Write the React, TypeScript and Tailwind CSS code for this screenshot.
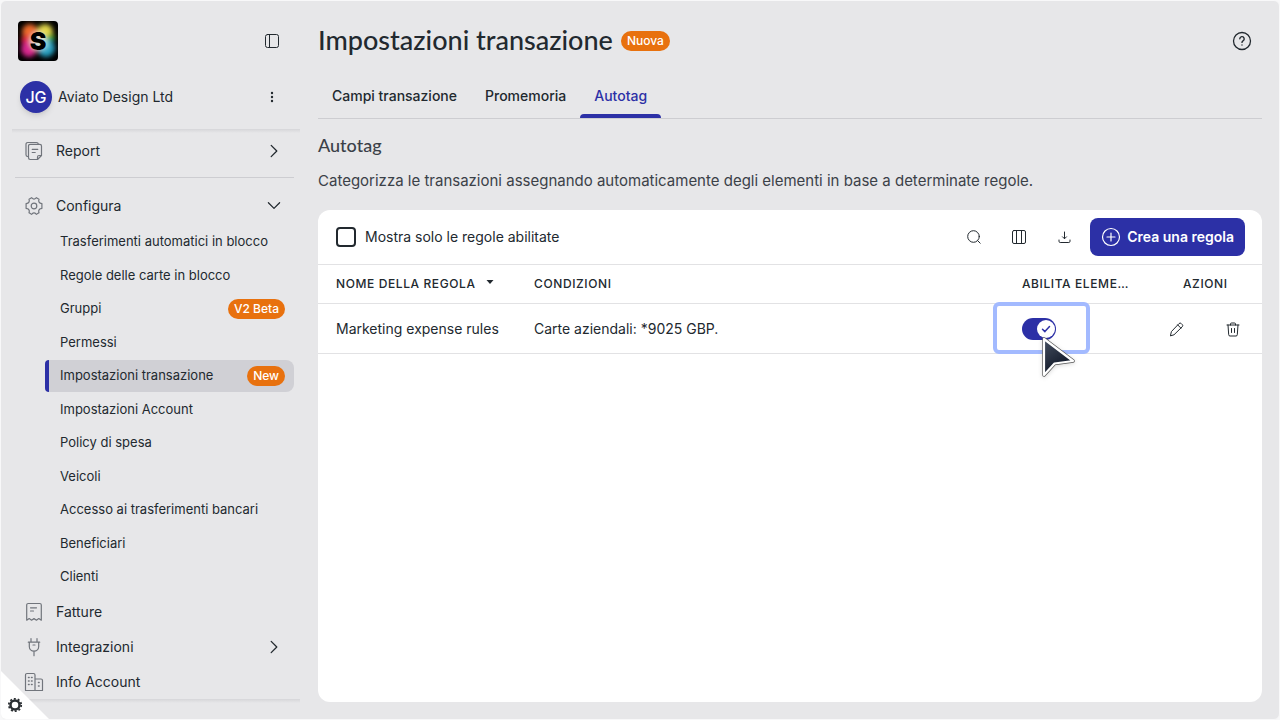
import { useState } from "react";
import type { ReactNode } from "react";
import clsx from "clsx";

type IconProps = { className?: string; children: ReactNode; box?: string; stroke?: number };

const Icon = ({ className, children, box = "0 0 20 20", stroke = 1.2 }: IconProps) => (
  <svg
    viewBox={box}
    className={clsx("shrink-0", className)}
    fill="none"
    stroke="currentColor"
    strokeWidth={stroke}
    strokeLinecap="round"
    strokeLinejoin="round"
    aria-hidden="true"
  >
    {children}
  </svg>
);

const ReportIcon = () => (
  <Icon className="size-5">
    <path d="M4.500 15.500h-.8A1.700 1.700 0 0 1 2 13.800V3.200A1.700 1.700 0 0 1 3.700 1.500h8.800A1.700 1.700 0 0 1 14.200 3.200" />
    <path d="M6.200 3.300h9.600a1.700 1.700 0 0 1 1.700 1.700v9.500l-4 4H6.200a1.700 1.700 0 0 1-1.700-1.700V5a1.700 1.700 0 0 1 1.700-1.700z" />
    <path d="M17.500 14.500h-2.500a1.500 1.500 0 0 0-1.500 1.500v2.500M8.200 8.300h5.600M8.200 11.500h3" />
  </Icon>
);

const GearIcon = () => (
  <Icon className="size-5">
    <path d="M8.100 2.200a2.600 2.600 0 0 0 3.800 0l.5-.5 2.600 1.500-.2.800a2.600 2.600 0 0 0 2 3.300l1.100.3v4.800l-1.100.3a2.600 2.600 0 0 0-2 3.300l.2.800-2.600 1.500-.5-.5a2.600 2.600 0 0 0-3.800 0l-.5.500L5 16.800l.2-.8a2.600 2.600 0 0 0-2-3.300l-1.100-.3V7.600l1.100-.3a2.600 2.600 0 0 0 2-3.300L5 3.200l2.600-1.500z" />
    <circle cx="10" cy="10" r="2.800" />
  </Icon>
);

const InvoiceIcon = () => (
  <Icon className="size-5">
    <path d="M2.700 18.200V3a1.500 1.500 0 0 1 1.500-1.500h11.600A1.500 1.500 0 0 1 17.300 3v15.200l-2.500-1.700-2.400 1.700-2.400-1.700-2.400 1.700-2.400-1.700zM6.500 5.800h6M6.500 9h3" />
  </Icon>
);

const PlugIcon = () => (
  <Icon className="size-5">
    <path d="M7 1.500v3.700M13 1.500v3.700M4.300 5.200h11.400M5.300 5.200v4.300a4.700 4.700 0 0 0 9.400 0V5.200M10 14.200v4.500M9 8h2" />
  </Icon>
);

const BuildingIcon = () => (
  <Icon className="size-5">
    <path d="M1.500 18.500V3A1.500 1.500 0 0 1 3 1.500h6.500A1.500 1.500 0 0 1 11 3v15.500zM11 7h6a1.500 1.500 0 0 1 1.500 1.500v10H11" />
    <path
      d="M4.500 5.500h.6M7.500 5.500h.6M4.500 9h.6M7.500 9h.6M4.500 12.500h.6M7.500 12.500h.6M14.500 10.500h.6M14.500 14h.6"
      strokeWidth="1.500"
    />
  </Icon>
);

const Chevron = ({ down }: { down?: boolean }) => (
  <Icon className="size-4 text-[#22292f]">
    <path d={down ? "M3 6l7 7 7-7" : "M6.500 3l7 7-7 7"} strokeWidth="1.600" />
  </Icon>
);

const Logo = () => (
  <svg viewBox="0 0 40 40" className="size-10 rounded" role="img" aria-label="S">
    <defs>
      <filter id="glow" x="-50%" y="-50%" width="200%" height="200%">
        <feGaussianBlur stdDeviation="2.800" />
      </filter>
    </defs>
    <rect width="40" height="40" fill="#000" />
    <g filter="url(#glow)">
      <circle cx="12" cy="11" r="8" fill="#ee6a2c" />
      <circle cx="27" cy="11" r="8" fill="#e2d84a" />
      <circle cx="33" cy="17" r="4" fill="#3a9e2e" />
      <circle cx="8" cy="19" r="5" fill="#e0283a" />
      <circle cx="11" cy="28" r="8" fill="#d8288e" />
      <circle cx="28" cy="27" r="9" fill="#25a0c0" />
      <ellipse cx="20" cy="20" rx="8" ry="9" fill="#f0d8c8" />
      <circle cx="25" cy="23" r="5" fill="#9fe4ea" />
    </g>
    <text
      x="20"
      y="29"
      textAnchor="middle"
      fontFamily="Inter, sans-serif"
      fontWeight="900"
      fontSize="25"
      fill="#000"
    >
      S
    </text>
  </svg>
);

const Badge = ({ children }: { children: ReactNode }) => (
  <span className="flex h-5 shrink-0 items-center rounded-full bg-[#e8710e] px-1.5 text-xs font-medium text-white">
    {children}
  </span>
);

const subItems = [
  { label: "Trasferimenti automatici in blocco" },
  { label: "Regole delle carte in blocco" },
  { label: "Gruppi", badge: "V2 Beta" },
  { label: "Permessi" },
  { label: "Impostazioni transazione", badge: "New", active: true },
  { label: "Impostazioni Account" },
  { label: "Policy di spesa" },
  { label: "Veicoli" },
  { label: "Accesso ai trasferimenti bancari" },
  { label: "Beneficiari" },
  { label: "Clienti" },
];

const NavRow = ({ icon, label, end }: { icon: ReactNode; label: string; end?: ReactNode }) => (
  <a href="#" className="flex h-[35px] shrink-0 items-center pr-[18px] pl-3 text-sm">
    <span className="mr-3 text-[#71757c]">{icon}</span>
    <span className="flex-1">{label}</span>
    {end}
  </a>
);

const Sidebar = () => (
  <aside className="flex w-[299px] shrink-0 flex-col pb-4 pl-[11px]">
    <div className="flex items-center justify-between pt-5 pr-4 pl-1.5">
      <Logo />
      <button type="button" aria-label="Comprimi menu" className="flex size-6 items-center justify-center">
        <Icon className="size-4" box="0 0 16 16" stroke={1}>
          <rect x="1.500" y="1.500" width="13" height="13" rx="2" />
          <path d="M5.500 1.500v13" />
        </Icon>
      </button>
    </div>
    <div className="mt-5 flex items-center pr-4 pl-2">
      <span className="mr-1.5 flex size-8 items-center justify-center rounded-full bg-[#2c30a6] text-base font-medium text-white shadow-md">
        JG
      </span>
      <span className="flex-1 text-sm">Aviato Design Ltd</span>
      <button type="button" aria-label="Altre opzioni" className="flex size-6 items-center justify-center">
        <svg viewBox="0 0 16 16" className="size-4" fill="currentColor" aria-hidden="true">
          <circle cx="8" cy="4" r="1.200" />
          <circle cx="8" cy="8" r="1.200" />
          <circle cx="8" cy="12" r="1.200" />
        </svg>
      </button>
    </div>
    <div className="mt-4 h-1 shrink-0 bg-linear-to-b from-[#d6d6d9] to-[#e7e7e9]" />
    <nav className="flex min-h-0 flex-1 flex-col">
      <NavRow icon={<ReportIcon />} label="Report" end={<Chevron />} />
      <hr className="mt-[9px] mr-1.5 mb-2.5 ml-[3px] border-[#cdcdd1]" />
      <NavRow icon={<GearIcon />} label="Configura" end={<Chevron down />} />
      <ul className="flex flex-1 flex-col justify-between pt-[3px] pr-1.5 pb-px pl-[33px]">
        {subItems.map((item) => (
          <li key={item.label}>
            <a
              href="#"
              aria-current={item.active ? "page" : undefined}
              className={clsx(
                "flex h-8 items-center justify-between rounded-l-sm rounded-r-lg border-l-4 pr-[9px] pl-[11px] text-[13px]",
                item.active ? "border-[#2c30a6] bg-[#d0d0d5]" : "border-transparent"
              )}
            >
              {item.label}
              {item.badge && <Badge>{item.badge}</Badge>}
            </a>
          </li>
        ))}
      </ul>
      <NavRow icon={<InvoiceIcon />} label="Fatture" />
      <NavRow icon={<PlugIcon />} label="Integrazioni" end={<Chevron />} />
      <NavRow icon={<BuildingIcon />} label="Info Account" />
    </nav>
    <div className="h-1 shrink-0 bg-linear-to-b from-[#d6d6d9] to-[#e7e7e9]" />
  </aside>
);

const tabs = ["Campi transazione", "Promemoria", "Autotag"];

const ToolButton = ({ label, children }: { label: string; children: ReactNode }) => (
  <button type="button" aria-label={label} className="flex h-9 w-[37px] items-center justify-center">
    <Icon className="size-4" box="0 0 16 16" stroke={1}>
      {children}
    </Icon>
  </button>
);

const Cursor = () => (
  <svg
    viewBox="0 0 36 44"
    className="pointer-events-none absolute top-8 left-9 z-10 h-11 w-9 drop-shadow-sm"
    aria-hidden="true"
  >
    <defs>
      <linearGradient id="cursor" x1="0" y1="0" x2="0.500" y2="1">
        <stop offset="0" stopColor="#465061" />
        <stop offset="1" stopColor="#0b1222" />
      </linearGradient>
    </defs>
    <path d="M4 3v36l10.500-11.500L33 25z" fill="#fff" stroke="#555" strokeWidth="3.500" strokeLinejoin="round" />
    <path d="M4 3v36l10.500-11.500L33 25z" fill="url(#cursor)" stroke="#fff" strokeWidth="2.200" strokeLinejoin="round" />
  </svg>
);

const RulesTable = () => {
  const [enabled, setEnabled] = useState(true);

  return (
    <table className="w-full table-fixed border-collapse text-left text-sm">
      <colgroup>
        <col className="w-[198px]" />
        <col />
        <col className="w-[161px]" />
        <col className="w-[97px]" />
      </colgroup>
      <thead>
        <tr className="h-[39px] border-y border-[#e2e2e4] text-xs tracking-wider uppercase">
          <th className="pl-[18px] font-medium" aria-sort="descending">
            <button type="button" className="flex items-center gap-2.5 tracking-wider uppercase">
              Nome della regola
              <svg viewBox="0 0 8 4" className="mb-1 h-1 w-2" fill="currentColor" aria-hidden="true">
                <path d="M.5 0h7L4 4z" />
              </svg>
            </button>
          </th>
          <th className="pl-[18px] font-medium">Condizioni</th>
          <th className="pl-[18px] font-medium">Abilita eleme…</th>
          <th className="pl-[18px] font-medium">Azioni</th>
        </tr>
      </thead>
      <tbody>
        <tr className="h-[50px] border-b border-[#e2e2e4]">
          <td className="pl-[18px]">Marketing expense rules</td>
          <td className="pl-[18px]">Carte aziendali: *9025 GBP.</td>
          <td className="relative pl-[18px]">
            <span className="pointer-events-none absolute -top-0.5 -bottom-px -left-[11px] w-[97px] rounded-md border-4 border-[#a3baff]" />
            <label className="relative flex h-[22px] w-[34px] items-center justify-end rounded-full bg-[#2c30a6] p-px">
              <input
                type="checkbox"
                role="switch"
                aria-label="Abilita elemento"
                checked={enabled}
                onChange={() => setEnabled(!enabled)}
                className="absolute inset-0 appearance-none"
              />
              <span className="flex size-[18px] items-center justify-center rounded-full bg-white text-[#2c30a6]">
                <Icon className="size-3" box="0 0 12 12">
                  <path d="M2.500 6.200l2.400 2.400 4.600-5" strokeWidth="1.500" />
                </Icon>
              </span>
            </label>
            <Cursor />
          </td>
          <td className="pr-[17px]">
            <div className="flex justify-between">
              <button type="button" aria-label="Modifica" className="flex size-6 items-center justify-center">
                <Icon className="size-4" box="0 0 16 16" stroke={1}>
                  <path d="M1.500 14.500l.9-3.900 7.600-8a1.600 1.600 0 0 1 2.300 0l.9.9a1.600 1.600 0 0 1 0 2.300l-7.900 7.700zM8.700 3.900l3.200 3.200" />
                </Icon>
              </button>
              <button type="button" aria-label="Elimina" className="flex size-6 items-center justify-center">
                <Icon className="size-4" box="0 0 16 16" stroke={1}>
                  <path d="M2 4h12M5.500 4V3a1 1 0 0 1 1-1h3a1 1 0 0 1 1 1v1M3 4l.7 9.700a1.300 1.300 0 0 0 1.300 1.300h6a1.300 1.300 0 0 0 1.300-1.300L13 4M6.500 7.500v4M9.500 7.500v4" />
                </Icon>
              </button>
            </div>
          </td>
        </tr>
      </tbody>
    </table>
  );
};

export default function App() {
  const [onlyEnabled, setOnlyEnabled] = useState(false);

  return (
    <div className="min-h-screen bg-[#f8f8f9] font-['Inter',sans-serif] text-[#22292f]">
      <div className="relative flex h-screen overflow-hidden rounded-md border border-[#f8f8f9] bg-[#e7e7e9]">
        <Sidebar />
        <main className="flex min-w-0 flex-1 flex-col pr-[17px] pb-[17px] pl-[18px]">
          <header className="flex h-[79px] shrink-0 items-center">
            <h1 className="mr-2 font-['Lato',sans-serif] text-[27px] font-medium">Impostazioni transazione</h1>
            <Badge>Nuova</Badge>
            <button type="button" aria-label="Aiuto" className="mr-2 ml-auto flex size-6 items-center justify-center">
              <Icon className="size-5">
                <circle cx="10" cy="10" r="8.500" strokeWidth="1.300" />
                <path d="M7.800 7.800a2.200 2.200 0 1 1 3.200 2c-.7.400-1 .8-1 1.600M10 14v.1" strokeWidth="1.400" />
              </Icon>
            </button>
          </header>
          <div role="tablist" className="flex h-[39px] shrink-0 border-b border-[#cdcdd1] text-sm font-medium">
            {tabs.map((tab) => (
              <button
                key={tab}
                type="button"
                role="tab"
                aria-selected={tab === "Autotag"}
                className={clsx(
                  "relative px-3.5 pb-1.5",
                  tab === "Autotag" && "text-[#2c30a6]"
                )}
              >
                {tab}
                {tab === "Autotag" && (
                  <span className="absolute inset-x-0 bottom-0 h-1 rounded-t bg-[#2c30a6]" />
                )}
              </button>
            ))}
          </div>
          <h2 className="mt-3 font-['Lato',sans-serif] text-lg/7 font-medium text-[#3b4148]">Autotag</h2>
          <p className="mt-2.5 text-[15px]/6 text-[#3b4148]">
            Categorizza le transazioni assegnando automaticamente degli elementi in base a determinate regole.
          </p>
          <section className="mt-[17px] flex-1 rounded-xl bg-white">
            <div className="flex h-[54px] items-center gap-2 pr-[17px] pl-[18px]">
              <label className="mr-auto flex items-center gap-[9px] text-sm">
                <input
                  type="checkbox"
                  checked={onlyEnabled}
                  onChange={() => setOnlyEnabled(!onlyEnabled)}
                  className="size-5 appearance-none rounded border-2 border-[#22292f] checked:bg-[#22292f]"
                />
                Mostra solo le regole abilitate
              </label>
              <ToolButton label="Cerca">
                <circle cx="7.500" cy="7.500" r="5.800" />
                <path d="M11.700 11.700l2.500 2.500" />
              </ToolButton>
              <ToolButton label="Colonne">
                <rect x="1.500" y="1.500" width="13" height="13" rx="1.500" />
                <path d="M5.500 1.500v13M10.500 1.500v13" />
              </ToolButton>
              <ToolButton label="Scarica">
                <path d="M8.500 3v6.500M6.500 7.800l2 2 2-2M3 11v1.300a1.200 1.200 0 0 0 1.200 1.200h8.600a1.200 1.200 0 0 0 1.200-1.200V11" />
              </ToolButton>
              <button
                type="button"
                className="flex h-[38px] items-center gap-1.5 rounded-lg bg-[#2c30a6] px-[11px] text-sm font-semibold text-white"
              >
                <Icon className="size-5">
                  <circle cx="10" cy="10" r="8.500" />
                  <path d="M10 6v8M6 10h8" />
                </Icon>
                Crea una regola
              </button>
            </div>
            <RulesTable />
          </section>
        </main>
        <button type="button" aria-label="Preferenze" className="absolute bottom-0 left-0 size-12">
          <svg viewBox="0 0 48 48" className="size-12" aria-hidden="true">
            <path d="M0 0l48 48H0z" fill="#fff" />
            <circle cx="14" cy="34" r="4.500" fill="none" stroke="#2b2f33" strokeWidth="2.500" />
            <circle cx="14" cy="34" r="6.200" fill="none" stroke="#2b2f33" strokeWidth="1.800" strokeDasharray="1.950 1.950" />
          </svg>
        </button>
      </div>
    </div>
  );
}
